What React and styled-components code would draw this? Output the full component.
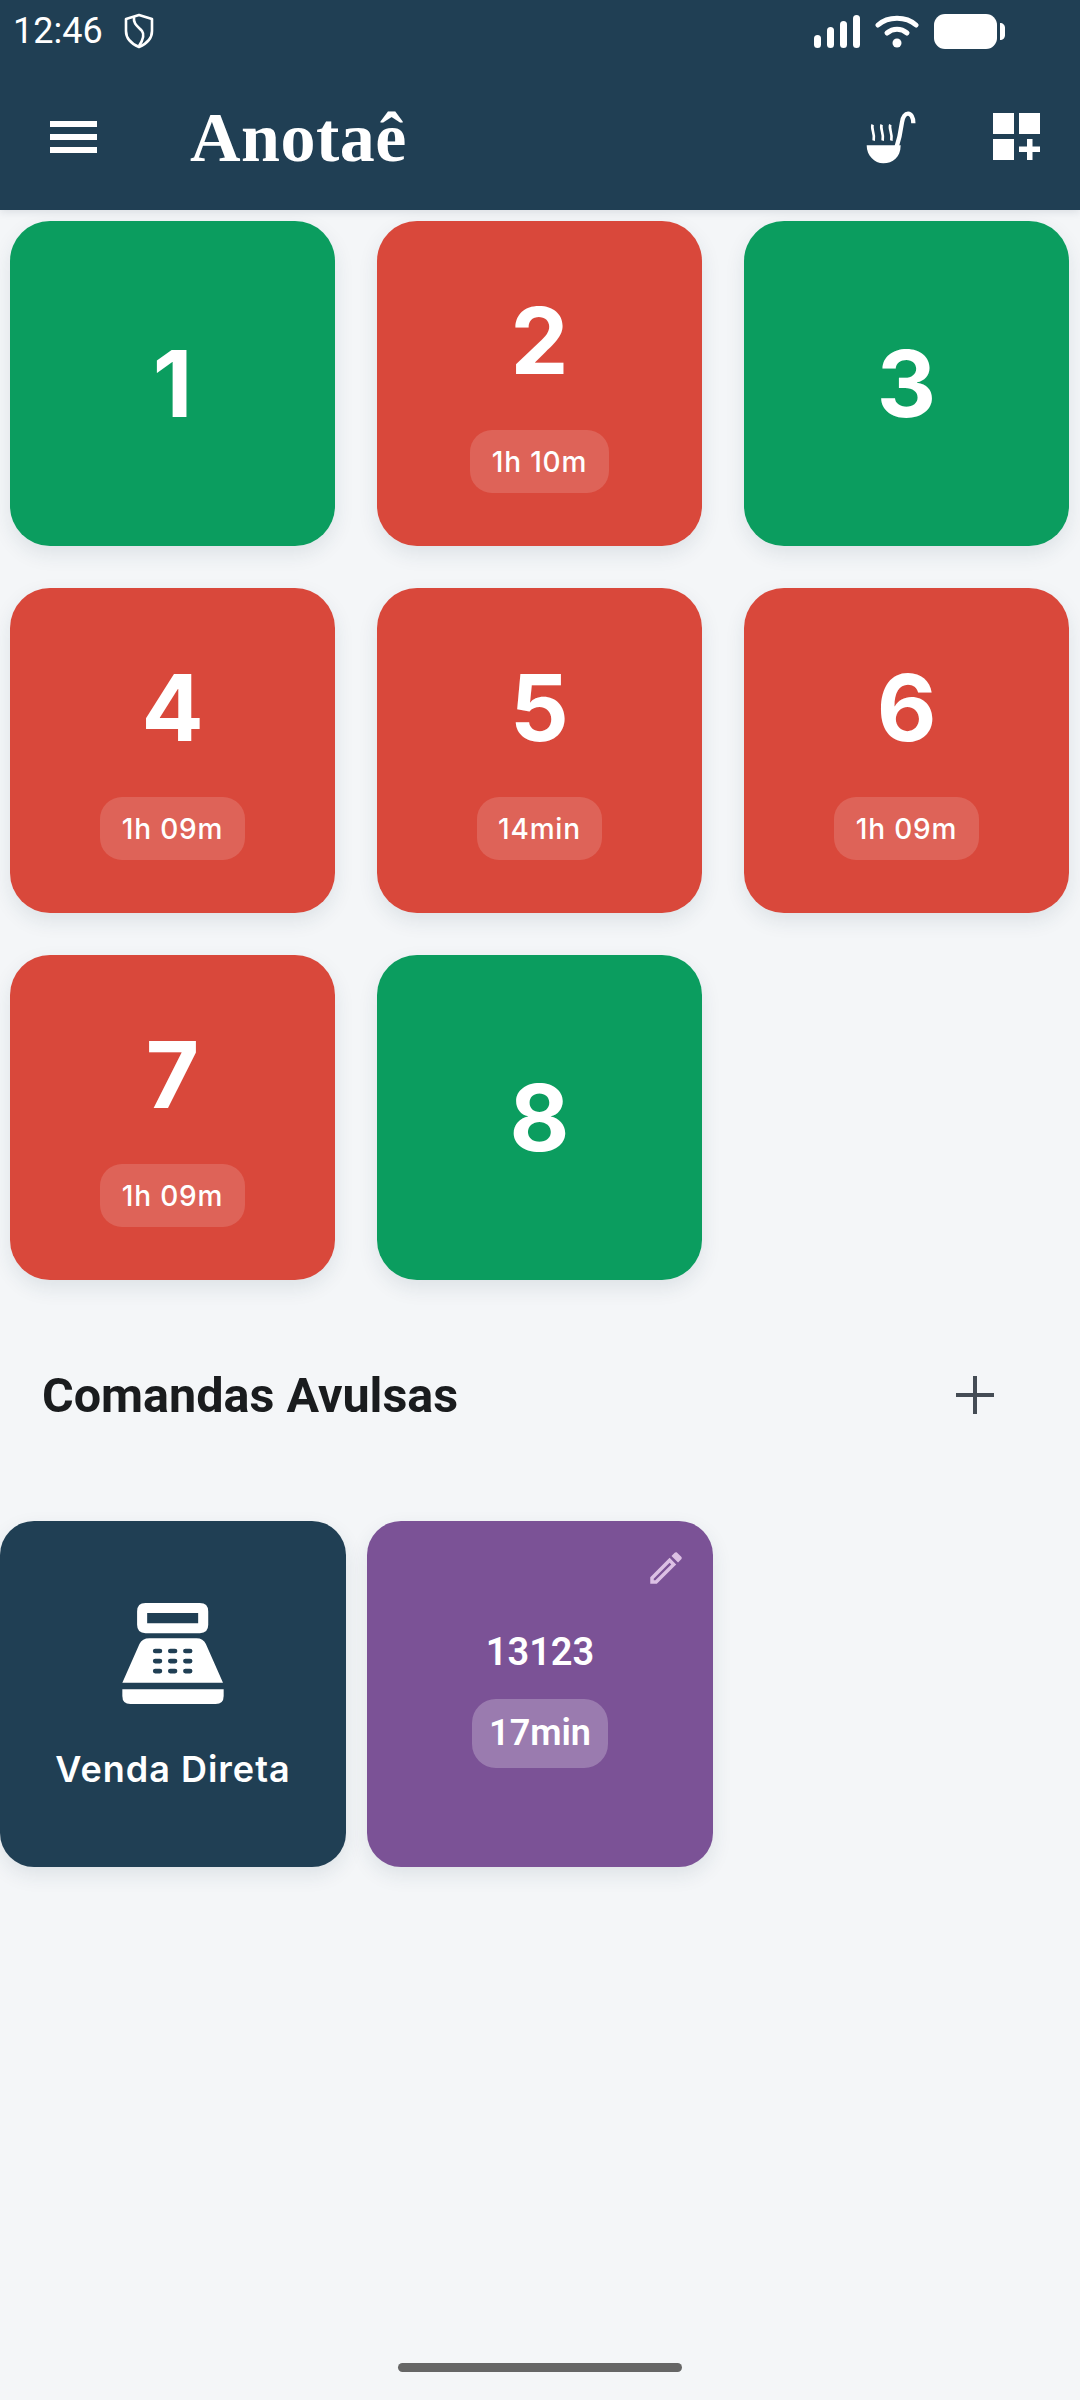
import React from "react";
import styled, { createGlobalStyle } from "styled-components";

const GlobalStyle = createGlobalStyle`
  html, body {
    margin: 0;
    padding: 0;
    background: #f4f6f8;
  }
  * {
    box-sizing: border-box;
  }
`;

const tables = [
  { n: 1, free: true },
  { n: 2, time: "1h 10m" },
  { n: 3, free: true },
  { n: 4, time: "1h 09m" },
  { n: 5, time: "14min" },
  { n: 6, time: "1h 09m" },
  { n: 7, time: "1h 09m" },
  { n: 8, free: true },
];

function ShieldIcon() {
  return (
    <svg width="30" height="36" viewBox="0 0 30 36" fill="none" stroke="#fff" strokeWidth="2.6">
      <path d="M15 2 L28 6 V18 C28 26 22 31 15 34 C8 31 2 26 2 18 V6 Z" strokeLinejoin="round" />
      <path d="M10 4 C9 12 15 14 18 18 C21 22 19 27 15 33" />
    </svg>
  );
}

function SignalIcon() {
  return (
    <svg width="46" height="33" viewBox="0 0 46 33" fill="#fff">
      <rect x="0" y="20" width="7" height="13" rx="3.5" />
      <rect x="13" y="12" width="7" height="21" rx="3.5" />
      <rect x="26" y="6" width="7" height="27" rx="3.5" />
      <rect x="39" y="0" width="7" height="33" rx="3.5" />
    </svg>
  );
}

function WifiIcon() {
  return (
    <svg width="44" height="33" viewBox="0 0 44 33" fill="none" stroke="#fff" strokeWidth="5" strokeLinecap="round">
      <path d="M3 10 C13 1 31 1 41 10" />
      <path d="M12 18 C18 13 26 13 32 18" />
      <circle cx="22" cy="28" r="4.5" fill="#fff" stroke="none" />
    </svg>
  );
}

function BatteryIcon() {
  return (
    <svg width="71" height="35" viewBox="0 0 71 35" fill="#fff">
      <rect x="0" y="0" width="63" height="35" rx="11" />
      <path d="M66 9 C69 9 71 11 71 14 V21 C71 24 69 26 66 26 Z" />
    </svg>
  );
}

function LadleIcon() {
  return (
    <svg width="50" height="54" viewBox="500 328 150 162" fill="none" stroke="#fff">
      <path d="M502 434 H604 C604 470 580 488 552 488 C525 488 502 465 502 434 Z" fill="#fff" stroke="none" />
      <path d="M590 445 C600 415 604 395 608 365 C612 330 642 330 642 368" strokeWidth="13" />
      <path d="M520 372 C514 385 528 398 523 420" strokeWidth="8" />
      <path d="M547 372 C541 385 555 398 550 420" strokeWidth="8" />
      <path d="M573 372 C567 385 581 398 576 420" strokeWidth="8" />
    </svg>
  );
}

function AddGridIcon() {
  return (
    <svg width="48" height="48" viewBox="0 0 48 48" fill="#fff">
      <rect x="0" y="0" width="21" height="21" />
      <rect x="26" y="0" width="21" height="21" />
      <rect x="0" y="26" width="21" height="21" />
      <rect x="34" y="26" width="5.5" height="21" />
      <rect x="26" y="33.5" width="21" height="5.5" />
    </svg>
  );
}

function RegisterIcon() {
  return (
    <svg width="102" height="101" viewBox="369 310 302 301" fill="#fff">
      <path
        fillRule="evenodd"
        d="M438 310 H600 Q625 310 625 335 V375 Q625 400 600 400 H438 Q413 400 413 375 V335 Q413 310 438 310 Z M443 340 V370 H595 V340 Z"
      />
      <path
        fillRule="evenodd"
        d="M450 415 H590 Q610 415 618 432 L669 548 H369 L420 432 Q428 415 450 415 Z
        M467 446 a7 7 0 0 0 0 14 h14 a7 7 0 0 0 0 -14 Z M512 446 a7 7 0 0 0 0 14 h14 a7 7 0 0 0 0 -14 Z M557 446 a7 7 0 0 0 0 14 h14 a7 7 0 0 0 0 -14 Z
        M467 476 a7 7 0 0 0 0 14 h14 a7 7 0 0 0 0 -14 Z M512 476 a7 7 0 0 0 0 14 h14 a7 7 0 0 0 0 -14 Z M557 476 a7 7 0 0 0 0 14 h14 a7 7 0 0 0 0 -14 Z
        M467 506 a7 7 0 0 0 0 14 h14 a7 7 0 0 0 0 -14 Z M512 506 a7 7 0 0 0 0 14 h14 a7 7 0 0 0 0 -14 Z M557 506 a7 7 0 0 0 0 14 h14 a7 7 0 0 0 0 -14 Z"
      />
      <path d="M369 567 H671 V587 Q671 611 647 611 H393 Q369 611 369 587 Z" />
    </svg>
  );
}

function PencilIcon() {
  return (
    <svg width="42" height="42" viewBox="0 0 24 24" fill="#dcc0e4">
      <path d="M14.06 9.02l.92.92L5.92 19H5v-.92l9.06-9.06M17.66 3c-.25 0-.51.1-.7.29l-1.83 1.83 3.75 3.75 1.83-1.83c.39-.39.39-1.02 0-1.41l-2.34-2.34c-.2-.2-.45-.29-.71-.29zm-3.6 3.19L3 17.25V21h3.75L17.81 9.94l-3.75-3.75z" />
    </svg>
  );
}

function App() {
  return (
    <Page>
      <GlobalStyle />
      <Header>
        <StatusBar>
          <Clock>12:46</Clock>
          <ShieldIcon />
          <StatusIcons>
            <SignalIcon />
            <WifiIcon />
            <BatteryIcon />
          </StatusIcons>
        </StatusBar>
        <Toolbar>
          <Burger>
            <span />
            <span />
            <span />
          </Burger>
          <Title>Anotaê</Title>
          <Actions>
            <LadleIcon />
            <AddGridIcon />
          </Actions>
        </Toolbar>
      </Header>

      <TableGrid>
        {tables.map((t) => (
          <TableCard key={t.n} $free={t.free}>
            <TableNumber>{t.n}</TableNumber>
            {t.time && <TimeBadge>{t.time}</TimeBadge>}
          </TableCard>
        ))}
      </TableGrid>

      <SectionRow>
        <SectionTitle>Comandas Avulsas</SectionTitle>
        <PlusButton />
      </SectionRow>

      <TicketRow>
        <DirectSale>
          <RegisterIcon />
          <DirectLabel>Venda Direta</DirectLabel>
        </DirectSale>
        <Ticket>
          <EditButton>
            <PencilIcon />
          </EditButton>
          <TicketName>13123</TicketName>
          <TicketBadge>17min</TicketBadge>
        </Ticket>
      </TicketRow>

      <HomeBar />
    </Page>
  );
}

const Page = styled.div`
  position: relative;
  width: 1080px;
  height: 2400px;
  overflow: hidden;
  background: #f4f6f8;
  font-family: "Inter", "Liberation Sans", sans-serif;
`;

const Header = styled.header`
  height: 210px;
  background: #203f54;
  box-shadow: 0 2px 8px rgba(30, 50, 70, 0.12);
`;

const StatusBar = styled.div`
  display: flex;
  align-items: center;
  height: 62px;
  padding: 0 75px 0 13px;
  color: #fff;
  gap: 21px;
`;

const Clock = styled.span`
  font-family: "Roboto", sans-serif;
  font-size: 36px;
  line-height: 1;
`;

const StatusIcons = styled.div`
  display: flex;
  align-items: center;
  gap: 15px;
  margin-left: auto;
`;

const Toolbar = styled.div`
  display: flex;
  align-items: center;
  height: 150px;
  padding: 0 39px 0 50px;
`;

const Burger = styled.div`
  display: flex;
  flex-direction: column;
  gap: 7px;
  width: 47px;
  span {
    display: block;
    height: 6px;
    background: #fff;
  }
`;

const Title = styled.h1`
  margin: 2px 0 0 93px;
  font-family: "Liberation Serif", serif;
  font-weight: 700;
  font-size: 70px;
  letter-spacing: 0.5px;
  line-height: 1;
  color: #fff;
`;

const Actions = styled.div`
  display: flex;
  align-items: center;
  gap: 77px;
  margin-left: auto;
`;

const TableGrid = styled.section`
  display: grid;
  grid-template-columns: repeat(3, 325px);
  gap: 42px;
  padding: 11px 10px 0;
`;

const TableCard = styled.div`
  display: flex;
  flex-direction: column;
  align-items: center;
  justify-content: center;
  height: 325px;
  border-radius: 40px;
  color: #fff;
  background: ${(p) => (p.$free ? "#0b9d5f" : "#d9483b")};
  box-shadow: 0 8px 20px rgba(30, 60, 80, 0.1);
`;

const TableNumber = styled.div`
  font-size: 92px;
  font-weight: 650;
  line-height: 134px;
`;

const TimeBadge = styled.div`
  display: flex;
  align-items: center;
  height: 63px;
  margin-top: 22px;
  padding: 0 21.5px;
  border-radius: 22px;
  font-size: 28px;
  font-weight: 550;
  letter-spacing: 0.8px;
  background: rgba(255, 255, 255, 0.15);
`;

const SectionRow = styled.div`
  display: flex;
  align-items: center;
  justify-content: space-between;
  height: 116px;
  margin-top: 57px;
  padding: 0 86px 0 42px;
`;

const SectionTitle = styled.h2`
  margin: 0;
  font-family: "Roboto", sans-serif;
  font-size: 48.5px;
  font-weight: 700;
  color: #1a1c1e;
`;

const PlusButton = styled.div`
  width: 38px;
  height: 38px;
  background:
    linear-gradient(#444c55, #444c55) center / 38px 4px no-repeat,
    linear-gradient(#444c55, #444c55) center / 4px 38px no-repeat;
`;

const TicketRow = styled.section`
  display: flex;
  gap: 21px;
  margin-top: 68px;
`;

const SmallCard = styled.div`
  position: relative;
  display: flex;
  flex-direction: column;
  align-items: center;
  justify-content: center;
  width: 346px;
  height: 346px;
  border-radius: 34px;
  color: #fff;
  box-shadow: 0 8px 20px rgba(30, 60, 80, 0.1);
`;

const DirectSale = styled(SmallCard)`
  padding-top: 6px;
  background: #203f54;
`;

const DirectLabel = styled.div`
  margin-top: 43px;
  font-size: 36px;
  font-weight: 600;
  letter-spacing: 1px;
  line-height: 44px;
`;

const Ticket = styled(SmallCard)`
  padding-top: 5px;
  background: #7b5296;
  font-family: "Roboto", sans-serif;
`;

const EditButton = styled.div`
  position: absolute;
  top: 26px;
  right: 26px;
  line-height: 0;
`;

const TicketName = styled.div`
  font-size: 38px;
  font-weight: 600;
  line-height: 52px;
`;

const TicketBadge = styled.div`
  display: flex;
  align-items: center;
  height: 69px;
  margin-top: 21px;
  padding: 0 17px;
  border-radius: 24px;
  font-size: 36px;
  font-weight: 600;
  background: rgba(255, 255, 255, 0.24);
`;

const HomeBar = styled.div`
  position: absolute;
  left: 398px;
  bottom: 28px;
  width: 284px;
  height: 9px;
  border-radius: 5px;
  background: #666;
`;

export default App;
